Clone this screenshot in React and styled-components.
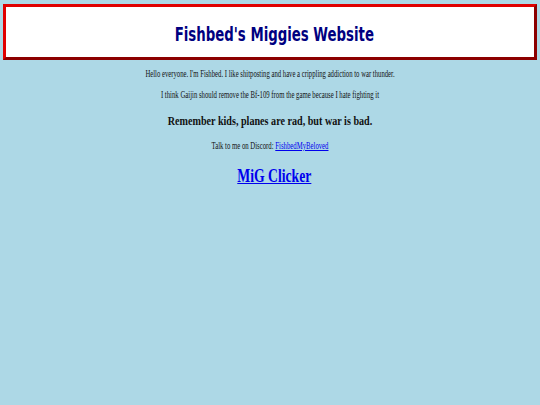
import React from "react";
import styled, { createGlobalStyle } from "styled-components";

const Global = createGlobalStyle`
  html, body { margin: 0; padding: 0; background: #add8e6; }
  body { font-family: "Liberation Serif", "Times New Roman", serif; color: #111; }
`;

const Page = styled.div`
  width: 540px;
  height: 405px;
  overflow: hidden;
  display: flex;
  flex-direction: column;
  padding-top: 4px;
  box-sizing: border-box;
`;

const Header = styled.header`
  margin: 0 3px;
  height: 56px;
  box-sizing: border-box;
  border: 3px outset #e00000;
  background: #ffffff;
  display: flex;
  align-items: center;
  justify-content: center;
  padding: 3px 0 0 8px;
`;

const Title = styled.h1`
  margin: 0;
  font-family: "DejaVu Sans", Verdana, sans-serif;
  font-weight: bold;
  font-size: 19px;
  line-height: 22px;
  color: #000080;
  white-space: nowrap;
  transform: scaleX(${(p) => p.$sx});
`;

const Line = styled.p`
  margin: ${(p) => p.$mt}px 0 0;
  padding-left: ${(p) => p.$shift || 0}px;
  text-align: center;
  white-space: nowrap;
  font-size: ${(p) => p.$size}px;
  line-height: ${(p) => p.$lh}px;
  font-weight: ${(p) => (p.$bold ? "bold" : "normal")};
  transform: scaleX(${(p) => p.$sx});
`;

const Link = styled.a`
  color: #0000ee;
  text-decoration: underline;
`;

export default function App() {
  return (
    <>
      <Global />
      <Page>
        <Header>
          <Title $sx={0.7}>Fishbed's Miggies Website</Title>
        </Header>
        <Line $mt={6.5} $size={10} $lh={14} $sx={0.67}>
          Hello everyone. I'm Fishbed. I like shitposting and have a crippling addiction to war thunder.
        </Line>
        <Line $mt={7.7} $size={10} $lh={14} $sx={0.675}>
          I think Gaijin should remove the Bf-109 from the game because I hate fighting it
        </Line>
        <Line $mt={10.7} $size={12.5} $lh={16} $bold $sx={0.81}>
          Remember kids, planes are rad, but war is bad.
        </Line>
        <Line $mt={10.3} $size={9.5} $lh={14} $sx={0.71}>
          Talk to me on Discord: <Link href="#">FishbedMyBeloved</Link>
        </Line>
        <Line $mt={12} $size={19} $lh={22} $bold $sx={0.72} $shift={12}>
          <Link href="#">MiG Clicker</Link>
        </Line>
      </Page>
    </>
  );
}
